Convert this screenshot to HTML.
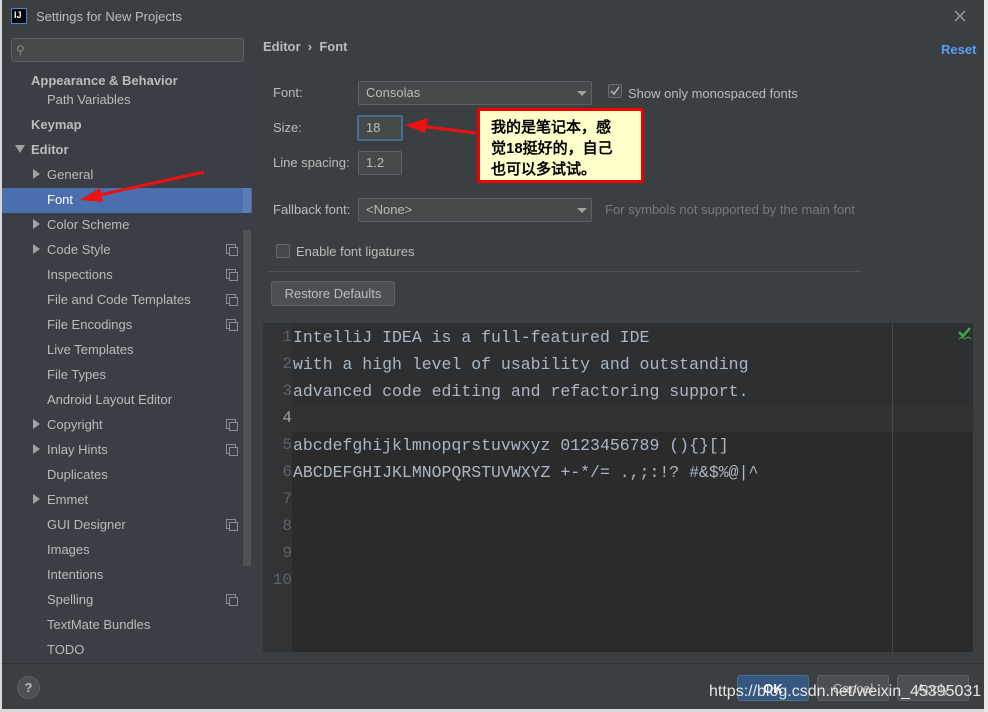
<!DOCTYPE html>
<html><head><meta charset="utf-8"><style>
*{margin:0;padding:0;box-sizing:border-box}
body{width:988px;height:712px;background:#d8d8d8;position:relative;overflow:hidden;font-family:"Liberation Sans","Noto Sans CJK SC",sans-serif;font-size:13px;color:#bbbbbb}
.win{position:absolute;left:2px;top:0;width:982px;height:709px;background:#3c3f41}
.abs{position:absolute}
.side{position:absolute;left:2px;top:33px;width:250px;height:630px;background:#3b3e45}
.it{position:absolute;white-space:nowrap;font-size:13px;color:#bbbbbb}
.b{font-weight:bold}
.tri{position:absolute;left:33px;width:0;height:0;border-top:5px solid transparent;border-bottom:5px solid transparent;border-left:7px solid #a0a0a0}
.cp{position:absolute;left:226px;width:10px;height:10px;border:1px solid #8a8f96}
.cp::after{content:"";position:absolute;left:2px;top:2px;width:7px;height:7px;border:1px solid #8a8f96;background:#3b3e45}
.field{position:absolute;border:1px solid #5e6163;background:#45494a;border-radius:2px;color:#bbbbbb;padding-left:7px;line-height:22px}
.lbl{position:absolute;color:#bbbbbb}
.ed{position:absolute;left:263px;top:323px;width:710px;height:329px;background:#2b2b2b;font-family:"Liberation Mono",monospace;font-size:16.5px}
.ln{position:absolute;left:0;width:29px;text-align:right;color:#606366;font-size:16px}
.tx{position:absolute;left:30px;color:#a9b7c6;white-space:pre}
.btn{position:absolute;border:1px solid #5e6163;background:#4c5052;border-radius:3px;color:#bbbbbb;text-align:center;line-height:26px}
</style></head><body>
<div class="win"></div>
<div class="abs" style="left:984px;top:0;width:4px;height:712px;background:#e8e8e8"></div>
<div class="abs" style="left:11px;top:8px;width:16px;height:16px;background:#000;border:1px solid #3d8fd1;color:#fff;font-size:9px;font-weight:bold;line-height:12px;padding-left:2px">IJ</div>
<div class="abs" style="left:36px;top:9px;font-size:13px;color:#bbbbbb">Settings for New Projects</div>
<svg class="abs" style="left:954px;top:10px" width="12" height="12"><path d="M1,1 L11,11 M11,1 L1,11" stroke="#9a9a9a" stroke-width="1.5"/></svg>
<div class="side"></div>
<div class="abs" style="left:11px;top:38px;width:233px;height:24px;border:1px solid #5e6163;border-radius:3px;background:#45494a"></div>
<div class="abs" style="left:16px;top:43px;font-size:12px;color:#888">⚲</div>
<div class="it b" style="left:31px;top:73px">Appearance &amp; Behavior</div>
<div class="it" style="left:47px;top:92px">Path Variables</div>
<div class="it b" style="left:31px;top:117px">Keymap</div>
<div class="abs" style="left:15px;top:145px;border-left:5px solid transparent;border-right:5px solid transparent;border-top:8px solid #a0a0a0"></div>
<div class="it b" style="left:31px;top:142px">Editor</div>
<div class="abs" style="left:2px;top:188px;width:250px;height:25px;background:#4b6eaf"></div>
<div class="abs" style="left:243px;top:230px;width:8px;height:336px;background:#4f5257"></div>
<div class="abs" style="left:243px;top:188px;width:8px;height:25px;background:#5d7bb5"></div>
<div class="tri" style="top:169px"></div><div class="it" style="left:47px;top:167px">General</div>
<div class="it" style="left:47px;top:192px;color:#fff">Font</div>
<div class="tri" style="top:219px"></div><div class="it" style="left:47px;top:217px">Color Scheme</div>
<div class="tri" style="top:244px"></div><div class="it" style="left:47px;top:242px">Code Style</div><div class="cp" style="top:244px"></div>
<div class="it" style="left:47px;top:267px">Inspections</div><div class="cp" style="top:269px"></div>
<div class="it" style="left:47px;top:292px">File and Code Templates</div><div class="cp" style="top:294px"></div>
<div class="it" style="left:47px;top:317px">File Encodings</div><div class="cp" style="top:319px"></div>
<div class="it" style="left:47px;top:342px">Live Templates</div>
<div class="it" style="left:47px;top:367px">File Types</div>
<div class="it" style="left:47px;top:392px">Android Layout Editor</div>
<div class="tri" style="top:419px"></div><div class="it" style="left:47px;top:417px">Copyright</div><div class="cp" style="top:419px"></div>
<div class="tri" style="top:444px"></div><div class="it" style="left:47px;top:442px">Inlay Hints</div><div class="cp" style="top:444px"></div>
<div class="it" style="left:47px;top:467px">Duplicates</div>
<div class="tri" style="top:494px"></div><div class="it" style="left:47px;top:492px">Emmet</div>
<div class="it" style="left:47px;top:517px">GUI Designer</div><div class="cp" style="top:519px"></div>
<div class="it" style="left:47px;top:542px">Images</div>
<div class="it" style="left:47px;top:567px">Intentions</div>
<div class="it" style="left:47px;top:592px">Spelling</div><div class="cp" style="top:594px"></div>
<div class="it" style="left:47px;top:617px">TextMate Bundles</div>
<div class="it" style="left:47px;top:642px">TODO</div>
<div class="abs b" style="left:263px;top:39px;color:#bbbbbb">Editor &nbsp;›&nbsp; Font</div>
<div class="abs b" style="left:941px;top:42px;color:#589df6">Reset</div>
<div class="lbl" style="left:273px;top:85px">Font:</div>
<div class="field" style="left:358px;top:81px;width:234px;height:24px">Consolas</div>
<div class="abs" style="left:577px;top:91px;border-left:5px solid transparent;border-right:5px solid transparent;border-top:5px solid #a0a0a0"></div>
<div class="abs" style="left:608px;top:84px;width:14px;height:14px;border:1px solid #6b6b6b;background:#43494a;border-radius:2px"></div>
<svg class="abs" style="left:608px;top:84px" width="14" height="14"><path d="M3,7 L6,10 L11,3" stroke="#bbb" stroke-width="1.5" fill="none"/></svg>
<div class="lbl" style="left:628px;top:86px">Show only monospaced fonts</div>
<div class="lbl" style="left:273px;top:120px">Size:</div>
<div class="field" style="left:357px;top:115px;width:46px;height:26px;border:2px solid #466d94">18</div>
<div class="lbl" style="left:273px;top:155px">Line spacing:</div>
<div class="field" style="left:358px;top:151px;width:44px;height:24px">1.2</div>
<div class="lbl" style="left:273px;top:202px">Fallback font:</div>
<div class="field" style="left:358px;top:198px;width:234px;height:24px">&lt;None&gt;</div>
<div class="abs" style="left:577px;top:208px;border-left:5px solid transparent;border-right:5px solid transparent;border-top:5px solid #a0a0a0"></div>
<div class="lbl" style="left:605px;top:202px;color:#787878">For symbols not supported by the main font</div>
<div class="abs" style="left:276px;top:244px;width:14px;height:14px;border:1px solid #6b6b6b;background:#43494a;border-radius:2px"></div>
<div class="lbl" style="left:296px;top:244px">Enable font ligatures</div>
<div class="abs" style="left:268px;top:271px;width:594px;height:1px;background:#515151"></div>
<div class="btn" style="left:271px;top:281px;width:124px;height:25px;line-height:23px">Restore Defaults</div>
<div class="ed">
<div class="abs" style="left:0;top:0;width:29px;height:329px;background:#313335"></div>
<div class="abs" style="left:29px;top:0;width:681px;height:82px;background:#2e2f30"></div>
<div class="abs" style="left:29px;top:82px;width:681px;height:27px;background:#323232"></div>
<div class="abs" style="left:629px;top:0;width:1px;height:329px;background:#474747"></div>
<svg class="abs" style="left:695px;top:3px" width="14" height="14"><path d="M1,6 L5,10 L12,2" stroke="#40a650" stroke-width="2.5" fill="none"/><path d="M1,13 L4,11 L7,13 L10,11 L13,13" stroke="#40a650" stroke-width="1" fill="none"/></svg>
<div class="ln" style="top:5px">1</div><div class="tx" style="top:5px">IntelliJ IDEA is a full-featured IDE</div>
<div class="ln" style="top:32px">2</div><div class="tx" style="top:32px">with a high level of usability and outstanding</div>
<div class="ln" style="top:59px">3</div><div class="tx" style="top:59px">advanced code editing and refactoring support.</div>
<div class="ln" style="top:86px;color:#a4a3a3">4</div>
<div class="ln" style="top:113px">5</div><div class="tx" style="top:113px">abcdefghijklmnopqrstuvwxyz 0123456789 (){}[]</div>
<div class="ln" style="top:140px">6</div><div class="tx" style="top:140px">ABCDEFGHIJKLMNOPQRSTUVWXYZ +-*/= .,;:!? #&amp;$%@|^</div>
<div class="ln" style="top:167px">7</div>
<div class="ln" style="top:194px">8</div>
<div class="ln" style="top:221px">9</div>
<div class="ln" style="top:248px">10</div>
</div>
<div class="abs" style="left:2px;top:663px;width:982px;height:1px;background:#2f3133"></div>
<div class="abs" style="left:17px;top:676px;width:23px;height:23px;border-radius:50%;background:#4c5052;border:1px solid #5e6163;color:#bbb;text-align:center;line-height:21px;font-weight:bold">?</div>
<div class="btn" style="left:737px;top:675px;width:72px;height:26px;background:#365880;border-color:#4c708c;color:#fff;font-weight:bold">OK</div>
<div class="btn" style="left:817px;top:675px;width:72px;height:26px">Cancel</div>
<div class="btn" style="left:897px;top:675px;width:72px;height:26px">Apply</div>
<div class="abs" style="left:709px;top:683px;font-size:16px;color:#e6e6e6;white-space:nowrap">https://blog.csdn.net/weixin_45395031</div>
<div class="abs" style="left:477px;top:108px;width:167px;height:75px;background:#ffffcc;border:3px solid #ee0000;color:#000;font-size:15px;font-weight:bold;line-height:21px;padding:6px 0 0 11px;font-family:'Liberation Sans','WenQuanYi Zen Hei',sans-serif">我的是笔记本，感<br>觉18挺好的，自己<br>也可以多试试。</div>
<svg class="abs" style="left:0;top:0" width="988" height="712">
<line x1="476" y1="133" x2="420" y2="126" stroke="#ee1111" stroke-width="3"/>
<path d="M405,125 L428,118 L425,133 Z" fill="#ee1111"/>
<line x1="204" y1="172" x2="95" y2="196" stroke="#ee1111" stroke-width="3"/>
<path d="M80,200 L100,188 L103,202 Z" fill="#ee1111"/>
</svg>
</body></html>
